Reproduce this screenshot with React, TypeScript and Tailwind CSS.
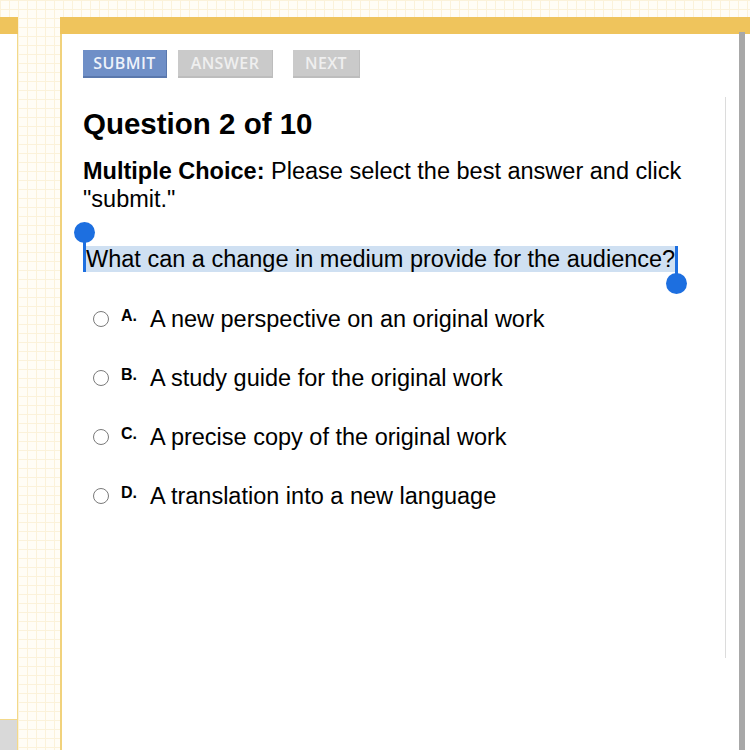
import React from "react"

const OPTIONS = [
  { letter: "A.", text: "A new perspective on an original work" },
  { letter: "B.", text: "A study guide for the original work" },
  { letter: "C.", text: "A precise copy of the original work" },
  { letter: "D.", text: "A translation into a new language" },
]

export default function App() {
  return (
    <div className="w-[750px] h-[750px] overflow-hidden pt-[17px] flex bg-[#fffdf6] bg-[linear-gradient(to_right,#fbf2da_1px,transparent_1px),linear-gradient(to_bottom,#fbf2da_1px,transparent_1px)] bg-[size:9px_9px] font-['Liberation_Sans',Arial,sans-serif] text-black">
      {/* left sliver of previous panel */}
      <div className="w-[18px] flex flex-col">
        <div className="h-[17px] bg-[#efc45c]" />
        <div className="flex-1 bg-white border-r border-[#f3d98a]" />
        <div className="h-[31px] bg-[#d9d9d9] border-t border-r border-[#f3d98a]" />
      </div>

      <div className="w-[42px]" />

      {/* main panel */}
      <div className="flex-1 flex flex-col">
        <div className="h-[17px] bg-[#efc45c]" />
        <div className="flex-1 flex bg-white border-l-2 border-[#f1d27c]">
          <div className="flex-1 pl-[21px] pt-[16px]">
            {/* buttons */}
            <div className="flex font-['Open_Sans',sans-serif] font-semibold text-[16px] tracking-[0.4px]">
              <button className="w-[84px] h-[28px] flex items-center justify-center bg-[#6f8fc7] text-[#eef2fa] border-b-2 border-r border-[#5a78ad]">
                SUBMIT
              </button>
              <button className="ml-[11px] w-[95px] h-[28px] flex items-center justify-center bg-[#cacaca] text-[#efefef] border-b-2 border-r border-[#bdbdbd]">
                ANSWER
              </button>
              <button className="ml-[20px] w-[67px] h-[28px] flex items-center justify-center bg-[#cacaca] text-[#efefef] border-b-2 border-r border-[#bdbdbd]">
                NEXT
              </button>
            </div>

            <h1 className="mt-[29px] text-[29.5px] leading-[34px] font-bold">Question 2 of 10</h1>

            <p className="mt-[16px] text-[23.5px] leading-[28px] pr-[20px]">
              <span className="font-bold">Multiple Choice:</span> Please select the best answer and click "submit."
            </p>

            {/* question with text selection */}
            <p className="mt-[32px] text-[23.5px] leading-[28px] whitespace-nowrap">
              <span className="relative bg-[#cfe0f2] border-l-[3px] border-r-[3px] border-[#1d6fe0]">
                What can a change in medium provide for the audience?
                <span className="absolute left-[-12px] top-[-24px] w-[21px] h-[21px] rounded-full bg-[#1d6fe0]" />
                <span className="absolute right-[-12px] top-[27px] w-[21px] h-[21px] rounded-full bg-[#1d6fe0]" />
                <span className="absolute right-[-3px] top-[0px] w-[3px] h-[36px] bg-[#1d6fe0]" />
                <span className="absolute left-[-3px] top-[-13px] w-[3px] h-[20px] bg-[#1d6fe0]" />
              </span>
            </p>

            <ul className="mt-[32px] ml-[10px] flex flex-col gap-[28px]">
              {OPTIONS.map((o) => (
                <li key={o.letter} className="flex items-baseline text-[23.5px] leading-[28px]">
                  <span className="inline-block w-[16px] h-[16px] rounded-full border-[1.5px] border-[#7a7a7a] bg-white" />
                  <span className="ml-[12px] w-[29px] relative -top-[6px] text-[16px] font-bold">{o.letter}</span>
                  <span>{o.text}</span>
                </li>
              ))}
            </ul>
          </div>

          <div className="w-[1px] mt-[63px] h-[561px] bg-[#dcdcdc]" />
          <div className="w-[13px]" />
          <div className="w-[6px] bg-[#a8a8a8] -mt-[2px]" />
          <div className="w-[5px]" />
        </div>
      </div>
    </div>
  )
}
